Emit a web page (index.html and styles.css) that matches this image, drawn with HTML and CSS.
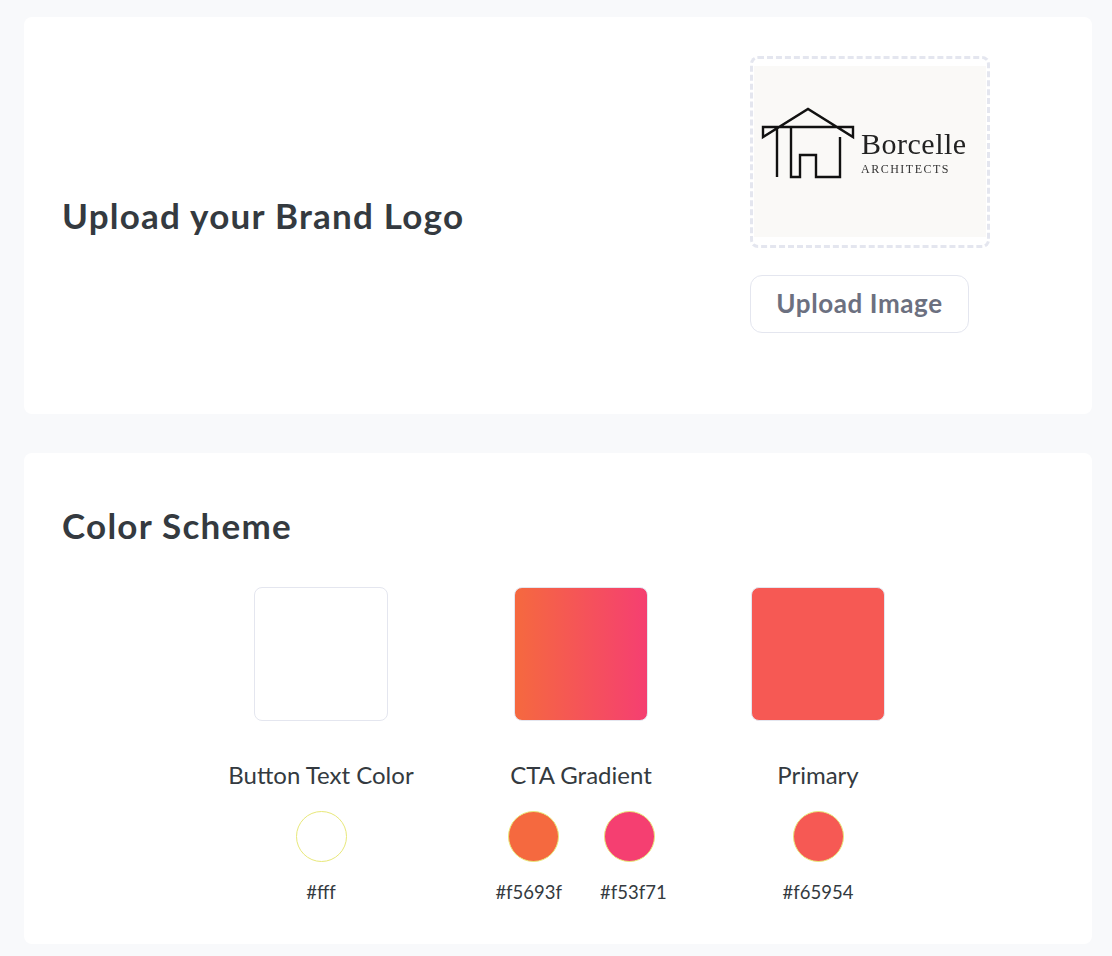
FILE: index.html
```html
<!DOCTYPE html>
<html>

<head>
    <title>Brand Settings</title>
    <link rel="stylesheet" href="styles.css">
</head>

<body>
    <div class="card logo-card">
        <h2 class="card-title">Upload your Brand Logo</h2>
        <div class="logo-upload">
            <div class="logo-box">
                <div class="logo-image">
                    <svg class="logo-house" width="96" height="74" viewBox="0 0 96 74" fill="none" stroke="#111" stroke-width="2.4">
                        <path d="M3 21H93V31L48 3L3 31Z" />
                        <path d="M17 21V71" />
                        <path d="M31 21V71H40V49H56V71H80V31" />
                    </svg>
                    <div class="logo-text">
                        <div class="logo-name">Borcelle</div>
                        <div class="logo-sub">ARCHITECTS</div>
                    </div>
                </div>
            </div>
            <button class="upload-btn">Upload Image</button>
        </div>
    </div>

    <div class="card scheme-card">
        <h2 class="card-title">Color Scheme</h2>
        <div class="scheme-row">
            <div class="scheme-col">
                <div class="swatch swatch-white"></div>
                <div class="scheme-label">Button Text Color</div>
                <div class="dots">
                    <div class="dot dot-white"></div>
                </div>
                <div class="hexes">
                    <div class="dot-hex">#fff</div>
                </div>
            </div>
            <div class="scheme-col">
                <div class="swatch swatch-gradient"></div>
                <div class="scheme-label">CTA Gradient</div>
                <div class="dots">
                    <div class="dot dot-orange"></div>
                    <div class="dot dot-pink"></div>
                </div>
                <div class="hexes">
                    <div class="dot-hex">#f5693f</div>
                    <div class="dot-hex">#f53f71</div>
                </div>
            </div>
            <div class="scheme-col">
                <div class="swatch swatch-primary"></div>
                <div class="scheme-label">Primary</div>
                <div class="dots">
                    <div class="dot dot-primary"></div>
                </div>
                <div class="hexes">
                    <div class="dot-hex">#f65954</div>
                </div>
            </div>
        </div>
    </div>
</body>

</html>
```

FILE: styles.css
```css
body {
    margin: 0;
    padding: 17px 20px 12px 24px;
    background-color: #f8f9fb;
    font-family: "Lato", "Open Sans", sans-serif;
    color: #343a40;
}

.card {
    background-color: white;
    border-radius: 8px;
}

.card-title {
    margin: 0;
    font-size: 35px;
    line-height: 40px;
    font-weight: 700;
    letter-spacing: 1.25px;
    color: #343a40;
}

.logo-card {
    display: flex;
    align-items: center;
    height: 397px;
    padding-left: 38px;
    padding-bottom: 2px;
    box-sizing: border-box;
    margin-bottom: 39px;
}

.logo-card .card-title {
    width: 688px;
}

.logo-upload {
    align-self: flex-start;
    padding-top: 39px;
}

.logo-box {
    width: 240px;
    height: 192px;
    box-sizing: border-box;
    border: 3px dashed #e4e6ef;
    border-radius: 8px;
    padding: 7px 1px 8px;
}

.logo-image {
    display: flex;
    align-items: flex-start;
    height: 100%;
    background-color: #faf9f7;
    padding: 40px 0 0 6px;
    box-sizing: border-box;
    filter: blur(0.4px);
}

.logo-house {
    flex-shrink: 0;
}

.logo-text {
    margin-left: 5px;
    padding-top: 22px;
}

.logo-name {
    font-family: "Liberation Serif", serif;
    font-size: 30px;
    line-height: 32px;
    letter-spacing: 0.5px;
    color: #222;
}

.logo-sub {
    margin-top: 2px;
    font-family: "Liberation Serif", serif;
    font-size: 12px;
    line-height: 14px;
    letter-spacing: 1.5px;
    color: #333;
}

.upload-btn {
    display: block;
    margin-top: 27px;
    width: 219px;
    height: 58px;
    background-color: white;
    border: 1px solid #e4e6ef;
    border-radius: 12px;
    font-family: inherit;
    font-size: 26px;
    line-height: 54px;
    font-weight: 700;
    letter-spacing: 0.6px;
    color: #6c7080;
    padding: 0 0 2px;
}

.scheme-card {
    height: 491px;
    box-sizing: border-box;
    padding: 52px 38px 0;
}

.scheme-row {
    display: grid;
    grid-template-columns: 180px 168px 134px;
    justify-content: center;
    gap: 86px;
    margin-top: 42px;
}

.scheme-col {
    display: flex;
    flex-direction: column;
    align-items: center;
}

.swatch {
    width: 134px;
    height: 134px;
    box-sizing: border-box;
    border: 1px solid #e4e6ef;
    border-radius: 8px;
}

.swatch-white {
    background-color: white;
}

.swatch-gradient {
    background: linear-gradient(90deg, #f5693f, #f53f71);
}

.swatch-primary {
    background-color: #f65954;
}

.scheme-label {
    margin-top: 39px;
    font-size: 24px;
    line-height: 30px;
    white-space: nowrap;
}

.dots {
    display: flex;
    gap: 45px;
    margin-top: 21px;
}

.dot {
    width: 51px;
    height: 51px;
    box-sizing: border-box;
    border: 1px solid #e8e87a;
    border-radius: 50%;
}

.dot-white {
    background-color: white;
}

.dot-orange {
    background-color: #f5693f;
}

.dot-pink {
    background-color: #f53f71;
}

.dot-primary {
    background-color: #f65954;
}

.hexes {
    display: flex;
    gap: 38px;
    margin-top: 18px;
}

.dot-hex {
    font-size: 18.5px;
    line-height: 24px;
    white-space: nowrap;
}
```
